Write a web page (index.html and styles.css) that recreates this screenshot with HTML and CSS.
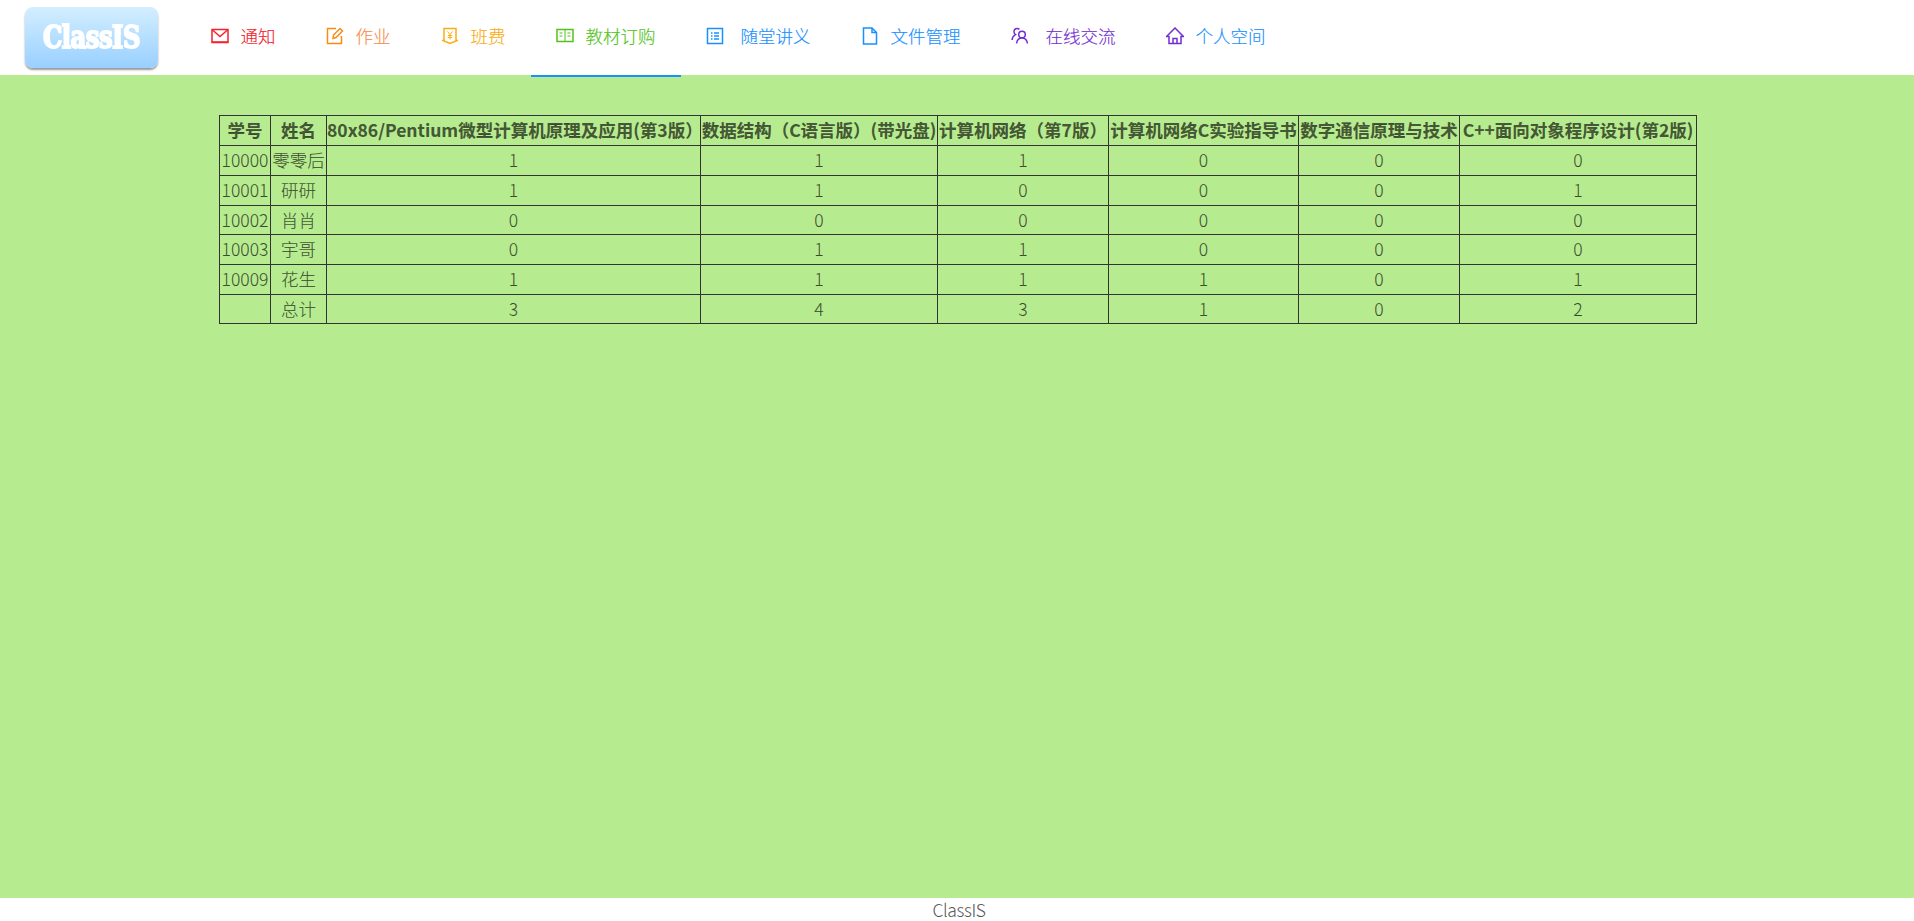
FILE: index.html
```html
<!DOCTYPE html>
<html lang="zh-CN">
<head>
<meta charset="utf-8">
<title>ClassIS</title>
<link rel="stylesheet" href="styles.css">
</head>
<body>
<div class="page">
  <header class="header">
    <div class="logo"><span class="logo-text">ClassIS</span></div>
    <nav class="menu">
      <a class="item red">
        <svg class="icon" viewBox="0 0 18 18"><path d="M1 2.500h16v13H1z"/><path d="M1.500 3l7.500 6.500L16.500 3"/><path d="M1 15h16"/></svg>
        <span>通知</span>
      </a>
      <a class="item orange">
        <svg class="icon" viewBox="0 0 18 18"><path d="M10 1.500H1.500v15h14V9"/><path d="M7 11.500l.5-3.500L14 1.500l2.500 2.500L10 10.500z"/></svg>
        <span>作业</span>
      </a>
      <a class="item gold">
        <svg class="icon" viewBox="0 0 18 18"><path d="M3 1.500h12v12.500l-6 2.500-6-2.500z"/><path d="M1 13.500h2M15 13.500h2"/><path d="M6.500 4.500L9 7.500l2.500-3M9 7.500V12.500M6.800 8.500h4.400M6.800 10.500h4.400" class="thin"/></svg>
        <span>班费</span>
      </a>
      <a class="item green active">
        <svg class="icon" viewBox="0 0 18 18"><path d="M1 2.500h16v12H1z"/><path d="M9 2.500v12M3.500 6h3M3.500 9h3M11.500 6h3M11.500 9h3" class="thin"/></svg>
        <span>教材订购</span>
      </a>
      <a class="item blue wide">
        <svg class="icon" viewBox="0 0 18 18"><path d="M1.500 1.500h15v15h-15z"/><path d="M5 6h1.500M8 6h5M5 9h1.500M8 9h5M5 12h1.500M8 12h5" class="dots"/></svg>
        <span>随堂讲义</span>
      </a>
      <a class="item blue">
        <svg class="icon" viewBox="0 0 18 18"><path d="M2.500 1h8.500l4.500 4.500V17h-13z"/><path d="M11 1v4.500h4.500"/></svg>
        <span>文件管理</span>
      </a>
      <a class="item purple wide">
        <svg class="icon" viewBox="0 0 18 18"><circle cx="11" cy="7.500" r="3.300"/><path d="M5.500 16.500c.5-3.500 2.500-5.500 5.500-5.500s5 2 5.500 5.500"/><path d="M8.500 2.300C7.800 1.800 7 1.500 6.200 1.500 4.400 1.500 3 3 3 4.800c0 1.200.6 2.200 1.500 2.800C2.500 8.500 1.300 10.500 1 13"/></svg>
        <span>在线交流</span>
      </a>
      <a class="item blue">
        <svg class="icon icon-purple" viewBox="0 0 18 18"><path d="M.5 9.500L9 1l8.500 8.500h-2.500v7H3v-7z"/><path d="M7 16.500v-5h4v5"/></svg>
        <span>个人空间</span>
      </a>
    </nav>
  </header>
  <main class="content">
    <table class="grid">
      <colgroup>
        <col class="c1"><col class="c2"><col class="c3"><col class="c4"><col class="c5"><col class="c6"><col class="c7"><col class="c8">
      </colgroup>
      <thead>
        <tr>
          <th>学号</th><th>姓名</th><th>80x86/Pentium微型计算机原理及应用(第3版）</th><th>数据结构（C语言版）(带光盘)</th><th>计算机网络（第7版）</th><th>计算机网络C实验指导书</th><th>数字通信原理与技术</th><th>C++面向对象程序设计(第2版)</th>
        </tr>
      </thead>
      <tbody>
        <tr><td>10000</td><td>零零后</td><td>1</td><td>1</td><td>1</td><td>0</td><td>0</td><td>0</td></tr>
        <tr><td>10001</td><td>研研</td><td>1</td><td>1</td><td>0</td><td>0</td><td>0</td><td>1</td></tr>
        <tr><td>10002</td><td>肖肖</td><td>0</td><td>0</td><td>0</td><td>0</td><td>0</td><td>0</td></tr>
        <tr><td>10003</td><td>宇哥</td><td>0</td><td>1</td><td>1</td><td>0</td><td>0</td><td>0</td></tr>
        <tr><td>10009</td><td>花生</td><td>1</td><td>1</td><td>1</td><td>1</td><td>0</td><td>1</td></tr>
        <tr><td></td><td>总计</td><td>3</td><td>4</td><td>3</td><td>1</td><td>0</td><td>2</td></tr>
      </tbody>
    </table>
  </main>
  <footer class="footer">ClassIS</footer>
</div>
</body>
</html>
```
FILE: styles.css
```css
* { box-sizing: border-box; }
html, body { margin: 0; height: 100%; }
body {
  font-family: "Noto Sans CJK SC", "Liberation Sans", sans-serif;
  font-size: 17.5px;
  font-weight: 300;
  color: rgba(0, 0, 0, 0.65);
  background: #fff;
  -webkit-text-stroke: 0.15px currentColor;
}
.page {
  display: flex;
  flex-direction: column;
  height: 921px;
  overflow: hidden;
}
.header {
  flex: none;
  position: relative;
  z-index: 1;
  height: 75px;
  display: flex;
  align-items: flex-start;
  padding-left: 25px;
  background: #fff;
}
.logo {
  flex: none;
  width: 133px;
  height: 61px;
  margin-top: 7px;
  display: flex;
  align-items: center;
  justify-content: center;
  border-radius: 8px;
  background: linear-gradient(#d3eeff, #99d0ff);
  box-shadow: 0 2px 2px rgba(0, 0, 0, 0.4);
}
.logo-text {
  display: inline-block;
  font-family: "DejaVu Serif Condensed", "DejaVu Serif", serif;
  font-weight: 700;
  font-size: 27px;
  letter-spacing: -0.5px;
  color: #fff;
  -webkit-text-stroke: 1.6px #fff;
  filter: blur(0.4px);
  transform: scale(1, 1.15);
}
.menu {
  display: flex;
  height: 77px;
  margin-left: 27.500px;
}
.item {
  display: flex;
  align-items: center;
  height: 77px;
  padding: 0 25px 4px;
  border-bottom: 2px solid transparent;
  white-space: nowrap;
  line-height: 1;
}
.item.active { border-bottom-color: #1890ff; }
.icon {
  flex: none;
  width: 18px;
  height: 18px;
  margin-right: 12px;
  fill: none;
  stroke: currentColor;
  stroke-width: 1.5;
}
.icon .thin { stroke-width: 1; }
.icon .dots { stroke-width: 1.300; }
.wide .icon { margin-right: 17px; }
.red { color: #f5222d; }
.orange { color: #fa8c46; }
.orange .icon { color: #fa8c16; }
.gold { color: #faad14; }
.green { color: #52c41a; }
.blue { color: #1890ff; }
.purple { color: #722ed1; }
.icon-purple { color: #722ed1; }
.content {
  flex: 1;
  padding-top: 40px;
  background: #b7eb8f;
}
.grid {
  table-layout: fixed;
  width: 1477px;
  margin: 0 0 0 219px;
  border-collapse: collapse;
  line-height: 26.67px;
  text-align: center;
}
.grid th, .grid td {
  height: 29.67px;
  padding: 1px 0;
  border: 1px solid #333;
  white-space: nowrap;
  overflow: visible;
}
.grid th { font-weight: 700; height: 30.200px; }
.c1 { width: 51px; }
.c2 { width: 56px; }
.c3 { width: 374px; }
.c4 { width: 237px; }
.c5 { width: 171px; }
.c6 { width: 190px; }
.c7 { width: 161px; }
.c8 { width: 237px; }
.footer {
  flex: none;
  height: 23px;
  padding-left: 4px;
  line-height: 23px;
  letter-spacing: -0.4px;
  text-align: center;
  background: #fff;
}
```
